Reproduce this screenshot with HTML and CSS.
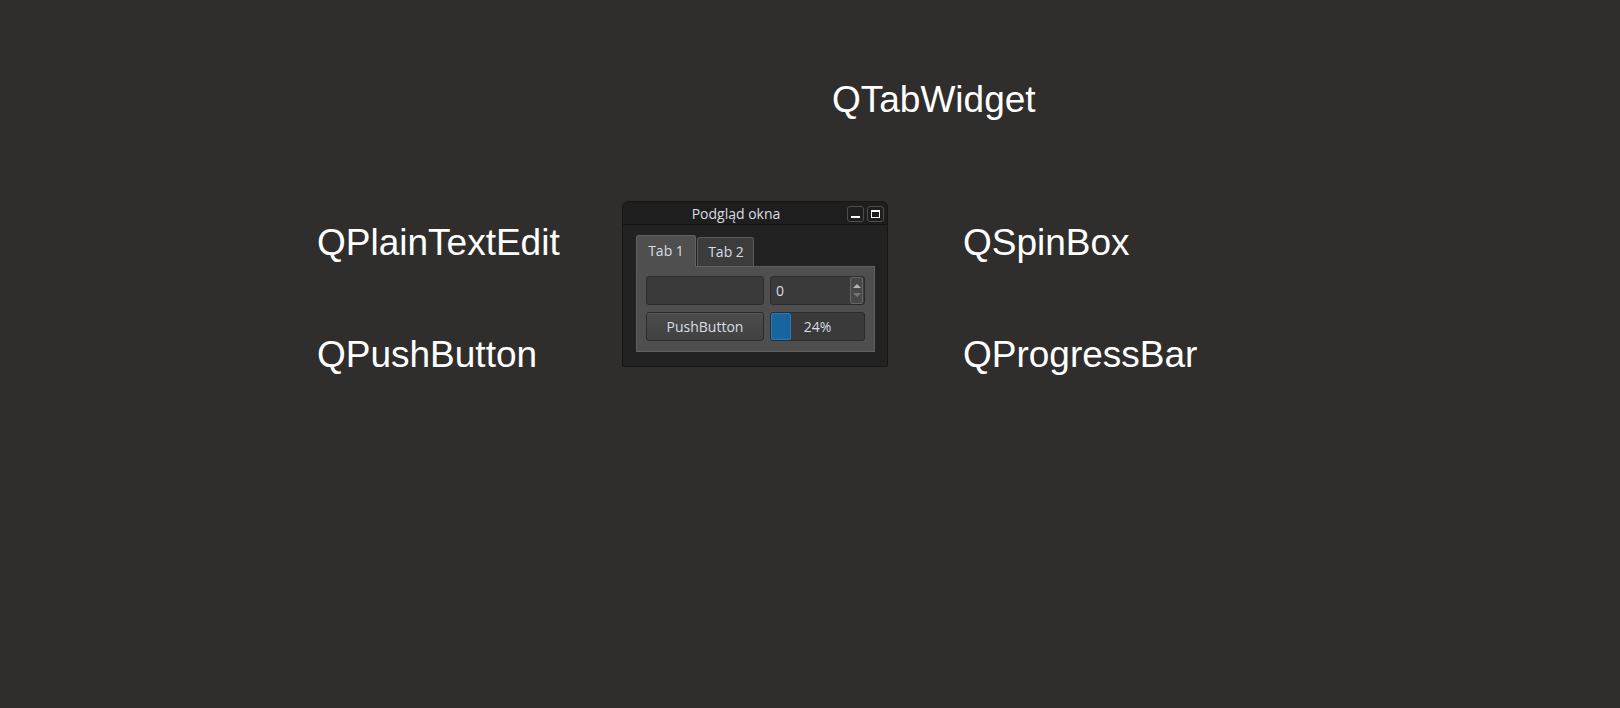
FILE: index.html
```html
<!DOCTYPE html>
<html lang="pl">
<head>
<meta charset="utf-8">
<title>Podgląd okna</title>
<link rel="stylesheet" href="styles.css">
</head>
<body>
<main class="canvas">
  <div class="label label-tab">QTabWidget</div>
  <div class="label label-plain">QPlainTextEdit</div>
  <div class="label label-push">QPushButton</div>
  <div class="label label-spin">QSpinBox</div>
  <div class="label label-progress">QProgressBar</div>

  <section class="window">
    <header class="titlebar">
      <div class="title">Podgląd okna</div>
      <div class="title-buttons">
        <button class="tbtn tbtn-min" aria-label="minimize"><span class="min-glyph"></span></button>
        <button class="tbtn tbtn-max" aria-label="maximize"><span class="max-glyph"></span></button>
      </div>
    </header>
    <div class="window-body">
      <div class="tabbar">
        <div class="tab tab-active">Tab 1</div>
        <div class="tab">Tab 2</div>
      </div>
      <div class="pane">
        <div class="lineedit"></div>
        <div class="spinbox">
          <span class="spin-value">0</span>
          <span class="spin-buttons">
            <span class="arrow-up"></span>
            <span class="arrow-down"></span>
          </span>
        </div>
        <div class="pushbutton">PushButton</div>
        <div class="progress">
          <span class="chunk" style="width:20px"></span>
          <span class="progress-text">24%</span>
        </div>
      </div>
    </div>
  </section>
</main>
</body>
</html>
```

FILE: styles.css
```css
* { box-sizing: border-box; }

html, body {
  margin: 0;
  padding: 0;
  background: #302e2c;
}

.canvas {
  position: relative;
  width: 1620px;
  height: 708px;
  overflow: hidden;
}

.label {
  position: absolute;
  font-family: "Liberation Sans", Arial, sans-serif;
  font-size: 37px;
  line-height: 37px;
  color: #ffffff;
  white-space: nowrap;
}
.label-tab { left: 832px; top: 81px; }
.label-plain { left: 317px; top: 224px; }
.label-push { left: 317px; top: 336px; }
.label-spin { left: 963px; top: 224px; }
.label-progress { left: 963px; top: 336px; }

.window {
  position: absolute;
  left: 622px;
  top: 201px;
  width: 266px;
  height: 166px;
  background: #232222;
  border: 1px solid #161616;
  border-radius: 6px 6px 2px 2px;
  display: flex;
  flex-direction: column;
  font-family: "Open Sans", "Liberation Sans", sans-serif;
  font-size: 14px;
  color: #d8dee4;
}

.titlebar {
  height: 23px;
  flex: none;
  display: flex;
  align-items: flex-start;
  background: #1f1e1e;
  border-bottom: 1px solid #121212;
  border-radius: 5px 5px 0 0;
}

.title {
  flex: 1;
  text-align: center;
  padding-top: 2px;
  padding-left: 2px;
  line-height: 20px;
  color: #d8dee4;
}

.title-buttons {
  display: flex;
  gap: 3px;
  padding-top: 4px;
  padding-right: 3px;
}

.tbtn {
  width: 17px;
  height: 16px;
  padding: 0;
  margin: 0;
  background: #1f1e1e;
  border: 1px solid #4e4e4e;
  border-radius: 3px;
  display: flex;
  align-items: center;
  justify-content: center;
}
.min-glyph {
  display: block;
  width: 9px;
  height: 2px;
  background: #ffffff;
  margin-top: 6px;
}
.max-glyph {
  display: block;
  width: 9px;
  height: 8px;
  border: 1px solid #ffffff;
  border-top-width: 2px;
}

.window-body {
  flex: 1;
  padding: 10px 12px 0 13px;
  display: flex;
  flex-direction: column;
}

.tabbar {
  display: flex;
  align-items: flex-end;
  gap: 1px;
  height: 32px;
  margin-bottom: -1px;
  position: relative;
  z-index: 1;
}

.tab {
  width: 57px;
  height: 30px;
  background: #3d3c3c;
  border: 1px solid #5b5b5b;
  border-bottom-color: #606060;
  border-radius: 3px 3px 0 0;
  text-align: center;
  line-height: 27px;
  padding-left: 1px;
}
.tab-active {
  width: 60px;
  height: 32px;
  background: #4f4f4f;
  border-color: #626262;
  border-bottom: none;
  line-height: 29px;
  padding-left: 0;
}

.pane {
  height: 86px;
  background: #4f4f4f;
  border: 1px solid #606060;
  padding: 9px;
  display: grid;
  grid-template-columns: 118px 95px;
  grid-template-rows: 29px 29px;
  column-gap: 6px;
  row-gap: 7px;
}

.lineedit {
  background: #3a3a3a;
  border: 1px solid #2b2b2b;
  border-radius: 3px;
}

.spinbox {
  background: #3a3a3a;
  border: 1px solid #2b2b2b;
  border-radius: 3px;
  display: flex;
  align-items: stretch;
}
.spin-value {
  flex: 1;
  padding-left: 5px;
  line-height: 28px;
}
.spin-buttons {
  width: 13px;
  margin-right: 1px;
  background: #484848;
  border: 1px solid #666666;
  border-radius: 2px;
  display: flex;
  flex-direction: column;
  align-items: center;
  justify-content: space-around;
  padding: 3px 0;
}
.arrow-up {
  width: 0;
  height: 0;
  border-left: 4px solid transparent;
  border-right: 4px solid transparent;
  border-bottom: 4px solid #b4b4b4;
}
.arrow-down {
  width: 0;
  height: 0;
  border-left: 4px solid transparent;
  border-right: 4px solid transparent;
  border-top: 4px solid #767676;
}

.pushbutton {
  background: linear-gradient(#4c4c4c, #414141);
  border: 1px solid #2b2b2b;
  border-radius: 3px;
  text-align: center;
  line-height: 27px;
  box-shadow: inset 0 1px 0 #575757;
}

.progress {
  position: relative;
  background: #3a3a3a;
  border: 1px solid #2b2b2b;
  border-radius: 3px;
  display: flex;
  align-items: stretch;
}
.chunk {
  display: block;
  background: #17659e;
  border: 1px solid #2c7cb8;
  border-radius: 2px;
}
.progress-text {
  position: absolute;
  inset: 0;
  text-align: center;
  line-height: 27px;
}
```
